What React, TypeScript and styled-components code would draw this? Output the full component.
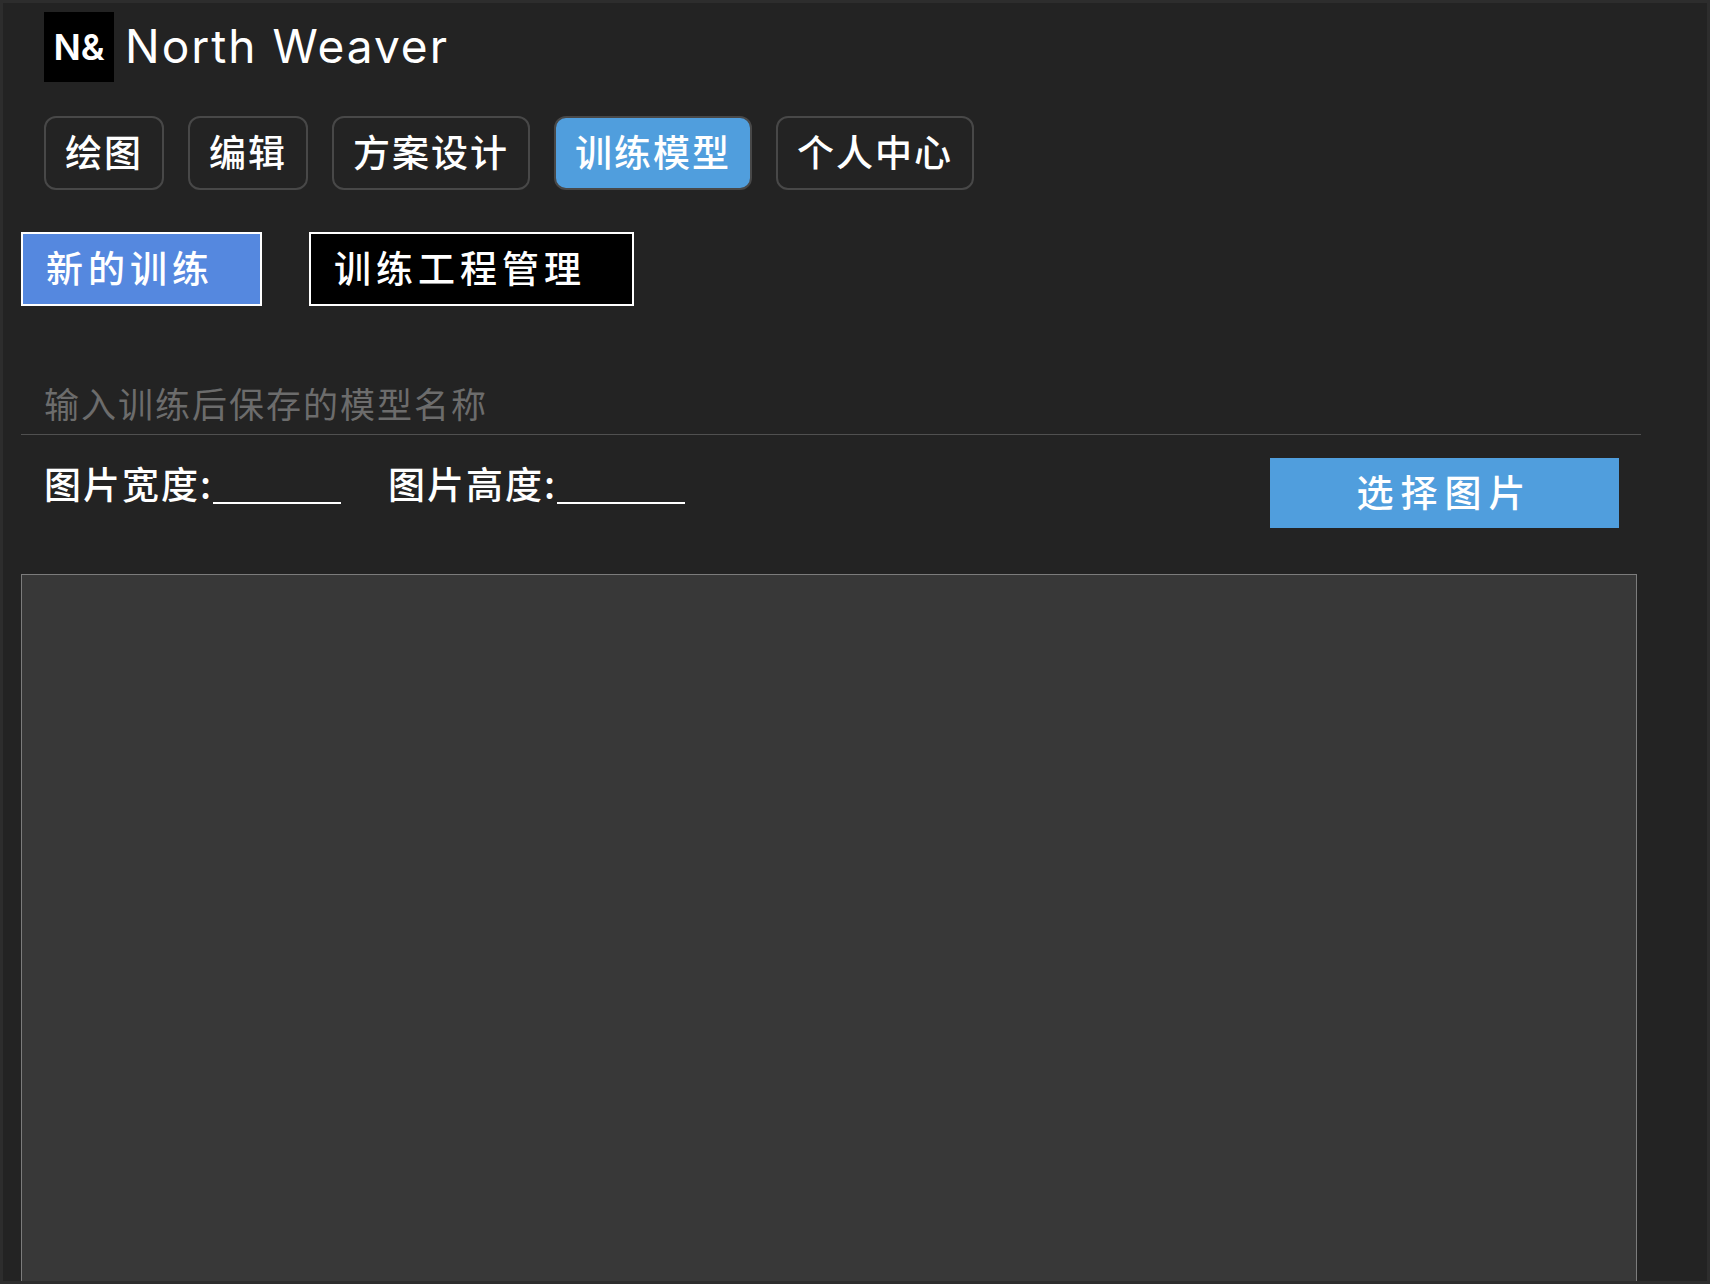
import React, { useState } from "react";
import styled, { createGlobalStyle } from "styled-components";

const GlobalStyle = createGlobalStyle`
  *, *::before, *::after { box-sizing: border-box; }
  body {
    margin: 0;
    background: #232323;
    color: #fff;
    font-family: "Noto Sans CJK SC", sans-serif;
    font-size: 37px;
    font-weight: 500;
  }
  button, input { font: inherit; color: inherit; margin: 0; }
`;

const Page = styled.div`
  display: flex;
  flex-direction: column;
  min-height: 100vh;
  border: 3px solid #2d2d2d;
`;

const Header = styled.header`
  display: flex;
  align-items: center;
  gap: 11px;
  padding: 9px 41px 0;
`;

const Logo = styled.div`
  display: grid;
  place-items: center;
  width: 70px;
  height: 70px;
  background: #000;
  font: 600 36px/1 Inter, sans-serif;
`;

const Brand = styled.h1`
  margin: 0;
  padding-bottom: 2px;
  font: 400 46px/68px Inter, sans-serif;
  letter-spacing: 2px;
`;

const Nav = styled.nav`
  display: flex;
  flex-wrap: wrap;
  gap: 24px;
  padding: 34px 41px 0;
`;

const NavButton = styled.button<{ $active: boolean }>`
  height: 74px;
  padding: 0 19px 4px;
  border: 2px solid #484848;
  border-radius: 12px;
  background: ${(p) => (p.$active ? "#509edd" : "transparent")};
  line-height: 66px;
  letter-spacing: 2px;
  cursor: pointer;
`;

const Content = styled.main`
  display: flex;
  flex: 1;
  flex-direction: column;
  padding: 42px 66px 0 18px;
`;

const Tabs = styled.div`
  display: flex;
  gap: 47px;
`;

const Tab = styled.button<{ $active: boolean }>`
  height: 74px;
  padding: 0 46px 4px 23px;
  border: 2px solid #fff;
  background: ${(p) => (p.$active ? "#5588df" : "#000")};
  line-height: 66px;
  letter-spacing: 5px;
  cursor: pointer;
`;

const NameInput = styled.input`
  width: 100%;
  height: 61px;
  margin-top: 68px;
  padding: 0 23px 4px;
  border: 0;
  border-bottom: 1px solid #505050;
  outline: 0;
  background: transparent;
  font-size: 35px;
  font-weight: 400;
  letter-spacing: 2px;

  &::placeholder { color: #6c6c6c; opacity: 1; }
`;

const Options = styled.div`
  display: flex;
  align-items: flex-start;
  gap: 47px;
  padding: 23px 22px 46px 23px;
`;

const Field = styled.label`
  display: flex;
  align-items: flex-start;
  line-height: 50px;
  letter-spacing: 2px;
  white-space: nowrap;
`;

const SizeInput = styled.input`
  width: 128px;
  height: 46px;
  padding: 0 8px;
  border: 0;
  border-bottom: 2px solid #fff;
  outline: 0;
  background: transparent;
`;

const PickButton = styled.button`
  width: 349px;
  height: 70px;
  margin-left: auto;
  padding: 0 0 4px;
  border: 0;
  background: #509edd;
  line-height: 66px;
  letter-spacing: 7px;
  cursor: pointer;
`;

const Gallery = styled.section`
  flex: 1;
  margin-right: 4px;
  border: 1px solid #7c7c7c;
  border-bottom: 0;
  background: #383838;
`;

const sections = ["绘图", "编辑", "方案设计", "训练模型", "个人中心"];
const views = ["新的训练", "训练工程管理"];

export default function App() {
  const [section, setSection] = useState("训练模型");
  const [view, setView] = useState("新的训练");

  return (
    <Page>
      <GlobalStyle />
      <Header>
        <Logo>N&amp;</Logo>
        <Brand>North Weaver</Brand>
      </Header>
      <Nav>
        {sections.map((name) => (
          <NavButton key={name} type="button" $active={name === section} onClick={() => setSection(name)}>
            {name}
          </NavButton>
        ))}
      </Nav>
      <Content>
        <Tabs>
          {views.map((name) => (
            <Tab key={name} type="button" $active={name === view} onClick={() => setView(name)}>
              {name}
            </Tab>
          ))}
        </Tabs>
        <NameInput type="text" placeholder="输入训练后保存的模型名称" aria-label="输入训练后保存的模型名称" />
        <Options>
          <Field>
            图片宽度:
            <SizeInput type="text" inputMode="numeric" />
          </Field>
          <Field>
            图片高度:
            <SizeInput type="text" inputMode="numeric" />
          </Field>
          <PickButton type="button">选择图片</PickButton>
        </Options>
        <Gallery />
      </Content>
    </Page>
  );
}
